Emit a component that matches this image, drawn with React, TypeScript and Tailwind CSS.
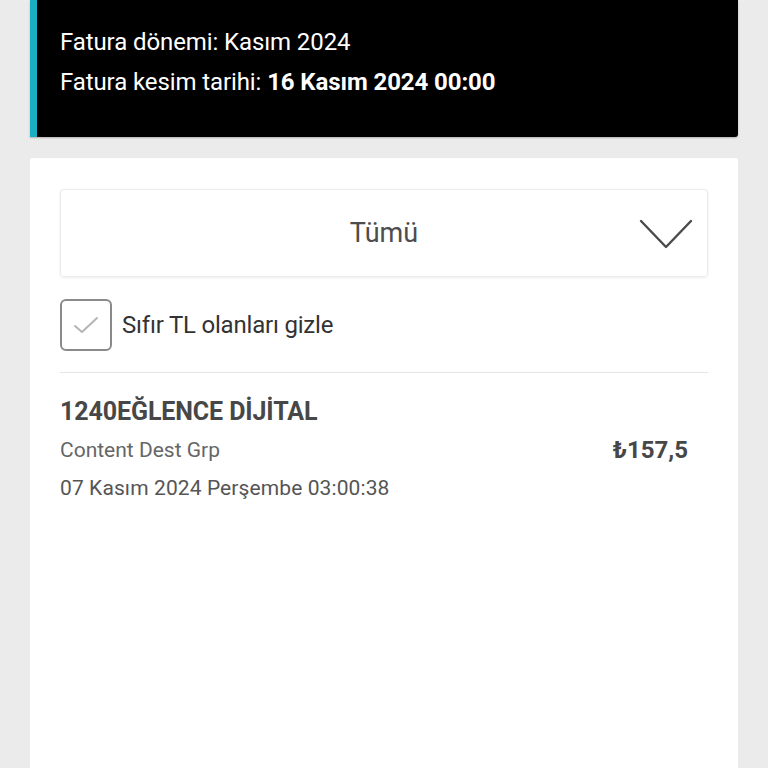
import React from 'react'

const font = { fontFamily: 'Roboto, "Liberation Sans", sans-serif' }

function Chevron() {
  return (
    <svg width="54" height="32" viewBox="0 0 54 32" fill="none">
      <path d="M2 3 L27 29 L52 3" stroke="#4a4a4a" strokeWidth="2.4" strokeLinecap="round" strokeLinejoin="round" />
    </svg>
  )
}

export default function App() {
  return (
    <div className="min-h-[768px] bg-[#ebebeb] px-[30px]" style={font}>
      {/* Bill period header */}
      <div className="flex h-[137px] flex-col justify-center gap-[10px] rounded-br-[3px] border-l-[7px] border-[#19aec4] bg-black pl-[23px] pb-[14px] text-white shadow-[0_1px_2px_rgba(0,0,0,0.25)]">
        <div className="text-[24px] leading-[30px] tracking-[-0.1px]">Fatura dönemi: Kasım 2024</div>
        <div className="text-[24px] leading-[30px] tracking-[-0.1px]">
          Fatura kesim tarihi: <span className="font-bold">16 Kasım 2024 00:00</span>
        </div>
      </div>

      {/* Transactions card */}
      <div className="mt-[21px] min-h-[610px] rounded-t-[3px] bg-white px-[30px] pt-[31px]">
        <div className="relative flex h-[88px] items-center justify-center rounded-[4px] border border-[#ececec] shadow-[0_1px_3px_rgba(0,0,0,0.08)]">
          <span className="text-[27px] text-[#4d4d4d]">Tümü</span>
          <div className="absolute right-[14px] top-[28px]">
            <Chevron />
          </div>
        </div>

        <div className="mt-[22px] flex items-center gap-[10px]">
          <div className="flex h-[52px] w-[52px] items-center justify-center rounded-[6px] border-2 border-[#8a8a8a]">
            <svg width="26" height="20" viewBox="0 0 26 20" fill="none">
              <path d="M2 11 L9 17 L24 3" stroke="#b5b5b5" strokeWidth="2" strokeLinecap="round" strokeLinejoin="round" />
            </svg>
          </div>
          <span className="text-[24px] tracking-[-0.2px] text-[#333]">Sıfır TL olanları gizle</span>
        </div>

        <div className="mt-[21px] h-px bg-[#e6e6e6]" />

        <div className="flex items-center justify-between pt-[24px] pr-[20px]">
          <div className="flex flex-col gap-[8px]">
            <div className="text-[25px] font-bold leading-[30px] tracking-[-0.1px] text-[#474747]">1240EĞLENCE DİJİTAL</div>
            <div className="text-[21px] leading-[30px] tracking-[0px] text-[#666]">Content Dest Grp</div>
            <div className="text-[21px] leading-[30px] tracking-[0.1px] text-[#555]">07 Kasım 2024 Perşembe 03:00:38</div>
          </div>
          <div className="text-[24px] font-bold text-[#474747]">₺157,5</div>
        </div>
      </div>
    </div>
  )
}
